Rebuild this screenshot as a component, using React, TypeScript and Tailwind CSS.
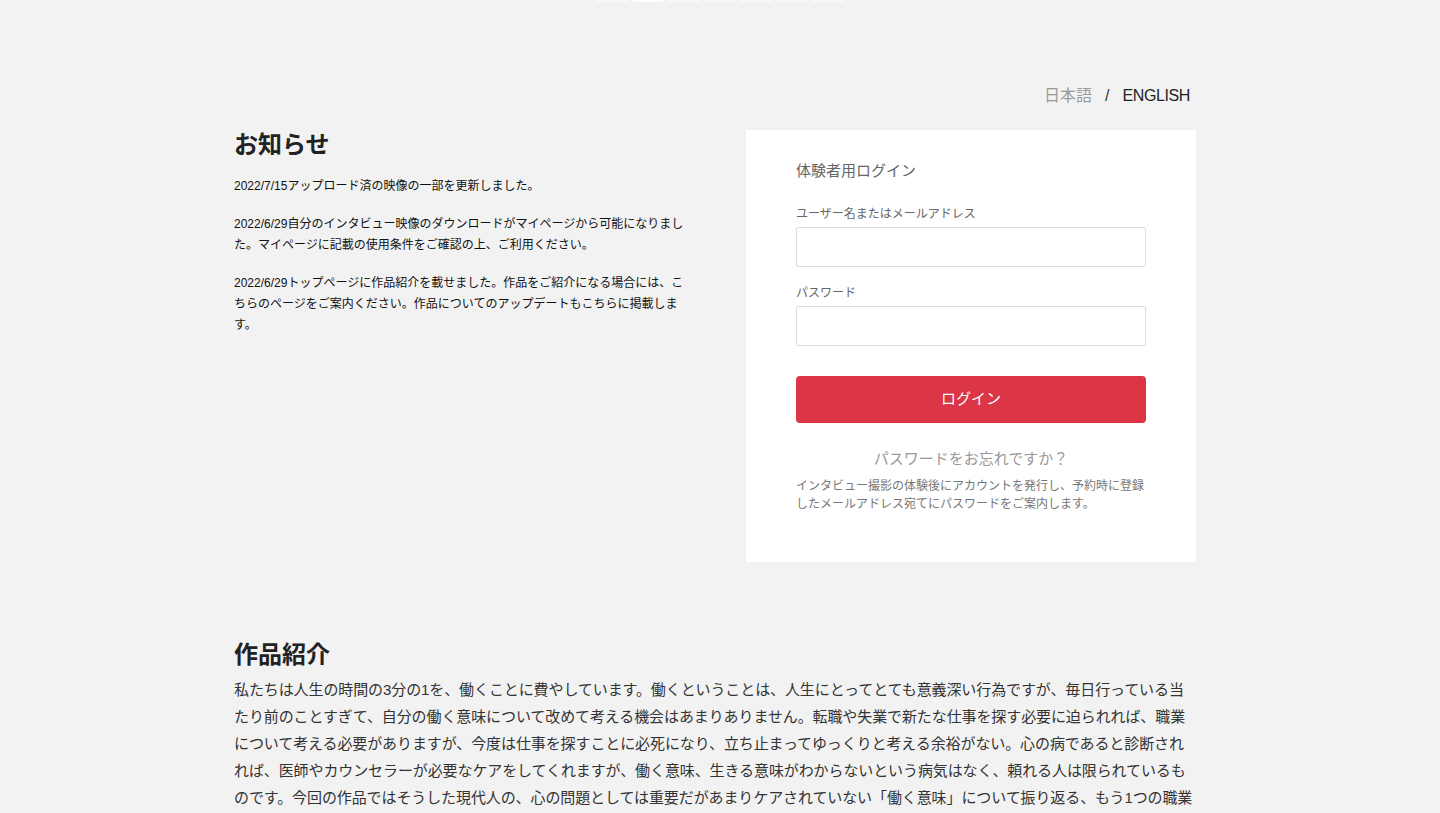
import React from "react";

const font = {
  fontFamily: '"Liberation Sans", "Noto Sans CJK JP", sans-serif',
};

export default function App() {
  const dots = [0, 1, 2, 3, 4, 5, 6];
  return (
    <div className="min-h-screen bg-[#f2f2f2] text-[#333]" style={font}>
      <div className="flex justify-center gap-[6px]">
        {dots.map((d) => (
          <div
            key={d}
            className={
              d === 1 ? "h-[2px] w-[30px] bg-white" : "h-[2px] w-[30px] bg-[#f9f9f9]"
            }
          />
        ))}
      </div>

      <div className="mx-auto w-[972px] pr-[10px]">
        <div className="mt-[82px] flex justify-end pr-[6px] text-[16px] leading-[24px]">
          <span className="text-[#999]">日本語</span>
          <span className="mx-[13px] text-[#333]">/</span>
          <span className="tracking-[-0.4px] text-[#222]">ENGLISH</span>
        </div>

        <div className="mt-[22px] flex justify-between">
          <div className="w-[456px]">
            <h2 className="text-[24px] font-bold leading-[29px] text-[#222]">お知らせ</h2>
            <div className="mt-[17px] text-[12px] leading-[21px] text-[#111]">
              <p className="mb-[17px]">2022/7/15アップロード済の映像の一部を更新しました。</p>
              <p className="mb-[17px]">
                2022/6/29自分のインタビュー映像のダウンロードがマイページから可能になりました。マイページに記載の使用条件をご確認の上、ご利用ください。
              </p>
              <p>
                2022/6/29トップページに作品紹介を載せました。作品をご紹介になる場合には、こちらのページをご案内ください。作品についてのアップデートもこちらに掲載します。
              </p>
            </div>
          </div>

          <div className="w-[450px] bg-white px-[50px] pb-[49px] pt-[30px]">
            <div className="text-[15px] leading-[22px] text-[#666]">体験者用ログイン</div>
            <label className="mt-[23px] block text-[12px] leading-[18px] text-[#666]">
              ユーザー名またはメールアドレス
            </label>
            <input
              type="text"
              className="mt-[4px] block h-[40px] w-full rounded-[2px] border border-[#dcdcdc] bg-white px-2 outline-none"
            />
            <label className="mt-[17px] block text-[12px] leading-[18px] text-[#666]">パスワード</label>
            <input
              type="password"
              className="mt-[4px] block h-[40px] w-full rounded-[2px] border border-[#dcdcdc] bg-white px-2 outline-none"
            />
            <button className="mt-[30px] flex h-[47px] w-full items-center justify-center rounded-[4px] bg-[#dc3545] text-[15px] text-white">
              ログイン
            </button>
            <div className="mt-[25px] text-center text-[15px] leading-[22px] text-[#999]">
              パスワードをお忘れですか？
            </div>
            <p className="mt-[7px] text-[12px] leading-[18px] text-[#777]">
              インタビュー撮影の体験後にアカウントを発行し、予約時に登録したメールアドレス宛てにパスワードをご案内します。
            </p>
          </div>
        </div>

        <div className="mt-[78px] pb-[60px]">
          <h2 className="text-[24px] font-bold leading-[29px] text-[#222]">作品紹介</h2>
          <p className="mt-[7px] text-[15px] leading-[27px] tracking-[-0.1px] text-[#333]">
            私たちは人生の時間の3分の1を、働くことに費やしています。働くということは、人生にとってとても意義深い行為ですが、毎日行っている当たり前のことすぎて、自分の働く意味について改めて考える機会はあまりありません。転職や失業で新たな仕事を探す必要に迫られれば、職業について考える必要がありますが、今度は仕事を探すことに必死になり、立ち止まってゆっくりと考える余裕がない。心の病であると診断されれば、医師やカウンセラーが必要なケアをしてくれますが、働く意味、生きる意味がわからないという病気はなく、頼れる人は限られているものです。今回の作品ではそうした現代人の、心の問題としては重要だがあまりケアされていない「働く意味」について振り返る、もう1つの職業体験を提供します。
          </p>
        </div>
      </div>
    </div>
  );
}
